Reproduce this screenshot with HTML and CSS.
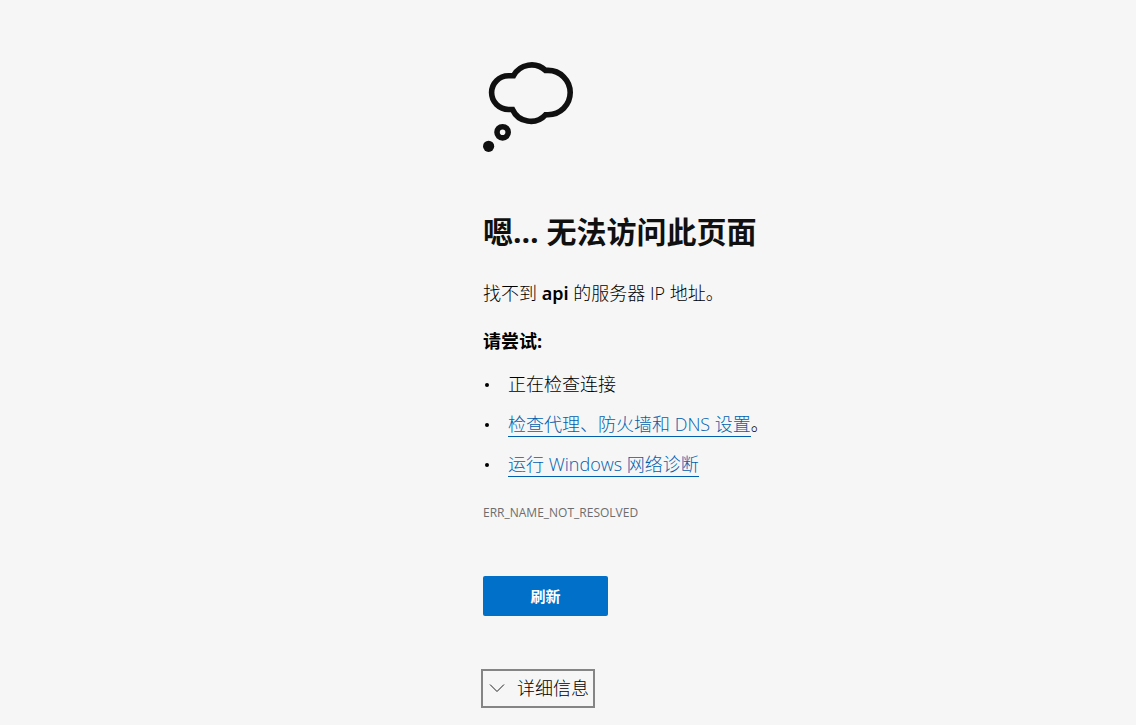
FILE: index.html
```html
<!DOCTYPE html>
<html lang="zh-CN">
<head>
<meta charset="utf-8">
<meta name="viewport" content="width=device-width, initial-scale=1">
<title>api</title>
<link rel="stylesheet" href="styles.css">
</head>
<body>
<main class="error-page">
  <svg class="cloud" viewBox="0 0 90 90" aria-hidden="true">
    <path d="M30.500 13.700A20.500 20.500 0 0 1 62.500 8.400H65A22.200 22.200 0 0 1 65 52.800H62.500A20 20 0 0 1 29.500 47.500H25.500A16.900 16.900 0 0 1 25.500 13.700Z" class="cloud-line"/>
    <circle cx="19.600" cy="70.300" r="5.600" class="cloud-line"/>
    <circle cx="5.600" cy="84.300" r="5.600" class="cloud-dot"/>
  </svg>
  <h1 class="title">嗯… 无法访问此页面</h1>
  <p class="summary">找不到 <strong>api</strong> 的服务器 IP 地址。</p>
  <h2 class="subtitle">请尝试:</h2>
  <ul class="suggestions">
    <li>正在检查连接</li>
    <li><a class="link" href="#proxy">检查代理、防火墙和 DNS 设置</a>。</li>
    <li><a class="link" href="#diagnose">运行 Windows 网络诊断</a></li>
  </ul>
  <p class="code">ERR_NAME_NOT_RESOLVED</p>
  <button class="reload" type="button">刷新</button>
  <button class="details" type="button" aria-expanded="false">
    <svg class="chevron" viewBox="0 0 16 16" aria-hidden="true"><path d="M1 4.500 8 11.500 15 4.500"/></svg>
    <span>详细信息</span>
  </button>
</main>
</body>
</html>
```
FILE: styles.css
```css
* {
  box-sizing: border-box;
}

body {
  margin: 0;
  background: #f6f6f6;
  color: #000;
  font-family: "Open Sans", "Noto Sans CJK SC", sans-serif;
  font-size: 18px;
  font-weight: 300;
  line-height: 24px;
}

.error-page {
  display: flex;
  flex-direction: column;
  align-items: flex-start;
  margin-left: calc(50% - 85px);
  padding: 62px 16px 16px 0;
}

.cloud {
  width: 90px;
  height: 90px;
}

.cloud-line {
  fill: none;
  stroke: #101010;
  stroke-width: 5.6;
}

.cloud-dot {
  fill: #101010;
}

.title {
  margin: 60px 0 0;
  color: #101010;
  font-size: 30px;
  font-weight: 700;
  line-height: 40px;
}

.summary {
  margin: 29px 0 0;
}

.summary strong {
  font-family: "Noto Sans", sans-serif;
  font-weight: 600;
}

.subtitle {
  margin: 24px 0 0;
  font-size: 18px;
  font-weight: 700;
}

.suggestions {
  display: grid;
  gap: 16px;
  margin: 19px 0 0;
  padding: 0;
  list-style: none;
}

.suggestions li {
  display: flex;
  align-items: center;
  height: 24px;
}

.suggestions li::before {
  content: "";
  width: 4px;
  height: 4px;
  margin: 2px 19px 0 2px;
  border-radius: 50%;
  background: #000;
}

.link {
  color: #0060ad;
  text-decoration: none;
  border-bottom: 1px solid currentColor;
}

.code {
  margin: 25px 0 0;
  color: #6d6d6d;
  font-size: 12px;
  font-weight: 500;
}

.reload {
  width: 125px;
  height: 40px;
  margin-top: 51px;
  border: 0;
  border-radius: 2px;
  background: #0070c9;
  color: #fff;
  font: inherit;
  font-size: 15px;
  font-weight: 700;
}

.details {
  display: flex;
  align-items: center;
  gap: 12px;
  margin: 53px 0 0 -2px;
  padding: 5px 4px 6px 6px;
  border: 2px solid #858585;
  background: transparent;
  color: inherit;
  font: inherit;
}

.chevron {
  width: 16px;
  height: 16px;
  fill: none;
  stroke: #202020;
  stroke-width: 1;
}
```
